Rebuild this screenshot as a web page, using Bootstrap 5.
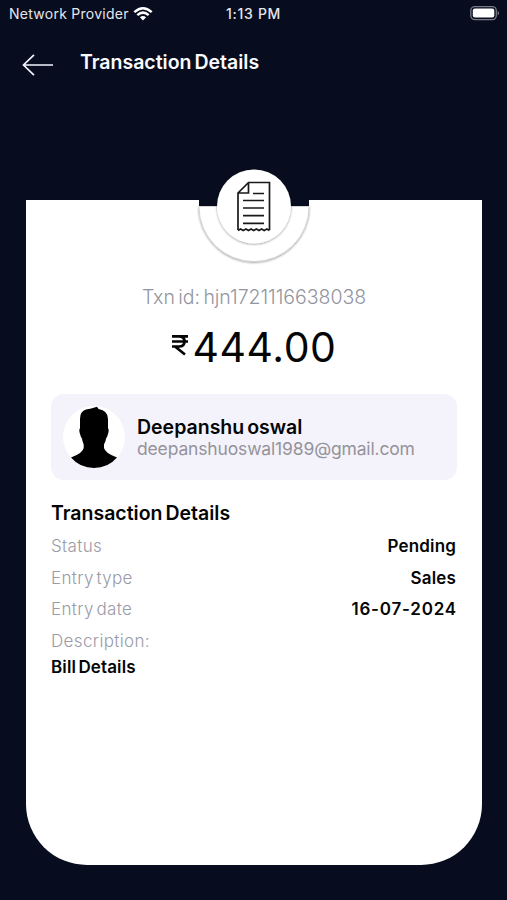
<!DOCTYPE html>
<html lang="en">
<head>
<meta charset="utf-8">
<meta name="viewport" content="width=device-width, initial-scale=1">
<title>Transaction Details</title>
<link href="https://cdn.jsdelivr.net/npm/bootstrap@5.3.0/dist/css/bootstrap.min.css" rel="stylesheet">
<style>
body{background:#070c1e;font-family:Inter,"Liberation Sans",sans-serif;height:900px;overflow:hidden;color:#050505}
.status-bar{height:28px;color:#e4e6ee;font-size:14px;line-height:28px;padding:0 7px 0 9px}
.provider{letter-spacing:.26px}
.side{width:217px}
.clock{font-weight:500;letter-spacing:.7px}
.app-bar{height:172px;padding:25px 0 0 22px}
.app-title{font-size:19.5px;line-height:24px;font-weight:600;letter-spacing:0;word-spacing:-2px;margin:-3px 0 0 26px;color:#fafbff}
.receipt{width:456px;height:665px;margin-left:26px;padding:0 25px;border-radius:0 0 61px 61px}
.emblem{left:171px;top:-32px}
.txn{margin-top:84px;font-size:19.5px;line-height:26px;font-weight:300;color:#9295a0;letter-spacing:-.04px;word-spacing:-2px}
.amount{font-size:41px;line-height:50px;margin-top:12px}
.sum{letter-spacing:.6px}
.rupee{width:17px;height:21px;margin:13px 4px 0 0}
.person{height:86px;margin-top:22px;border-radius:13px;background:#f4f2fb;padding-left:12px}
.person-name{font-size:19.5px;line-height:22px;font-weight:600;word-spacing:-2px}
.mail{font-size:17.5px;line-height:20px;color:#949399;letter-spacing:-.15px;margin-top:1px}
.section-title{font-size:19.5px;line-height:24px;font-weight:600;letter-spacing:0;word-spacing:-2px;margin:21px 0 6px}
.line{height:31.7px;line-height:31.7px;font-size:17px}
.line .key{color:#999ba6;font-weight:300;letter-spacing:.35px;word-spacing:-2.5px}
.val{font-weight:600;letter-spacing:.15px}
.line .val{margin-right:1px}
.line .date{letter-spacing:.8px;margin-right:0}
.bill{font-size:17px;line-height:20px;letter-spacing:.12px;word-spacing:-2px;margin-top:-1px}
</style>
</head>
<body>
<header>
  <div class="status-bar d-flex justify-content-between">
    <div class="side d-flex align-items-center gap-1"><span class="provider text-nowrap">Network Provider</span>
      <svg width="20" height="16" viewBox="0 0 20 16" fill="none" stroke="#fff" stroke-width="2.5"><path d="M1.3 6.1Q10-1.7 18.7 6.1M4.3 9.1Q10 4.2 15.7 9.1"/><path d="M6.9 11.2Q10 8.6 13.1 11.2L10 14.6Z" fill="#fff" stroke="none"/></svg>
    </div>
    <span class="clock flex-grow-1">1:13 PM</span>
    <svg class="mt-1" width="31" height="18" viewBox="0 0 31 18"><rect x="1.8" y="2.6" width="25.5" height="13" rx="4" fill="none" stroke="#777985" stroke-width="1.3"/><rect x="3.8" y="4.6" width="21.5" height="9" rx="2" fill="#fff"/><path d="M28.7 6.7q3 2.4 0 4.8z" fill="#777985"/></svg>
  </div>
  <div class="app-bar d-flex align-items-start">
    <svg width="32" height="24" viewBox="0 0 32 24" fill="none" stroke="#f2f4ff" stroke-width="1.7"><path d="M31 12H1.5M12 1.8 1.5 12 12 22.2"/></svg>
    <h1 class="app-title">Transaction Details</h1>
  </div>
</header>
<main class="receipt bg-white position-relative">
  <svg class="emblem position-absolute" width="114" height="100" viewBox="0 0 114 100">
    <defs><filter id="soft" x="-10%" y="-10%" width="120%" height="125%"><feDropShadow dx="0" dy=".6" stdDeviation=".8" flood-color="#000" flood-opacity=".48"/></filter></defs>
    <path d="M2 31H112V38H2Z" fill="#070c1e"/>
    <path d="M2 38.5H112A55 55 0 0 1 2 38.5Z" fill="#fff" stroke="#ccc" stroke-width=".7" filter="url(#soft)"/>
    <circle cx="57" cy="38.5" r="37" fill="#fff" filter="url(#soft)"/>
    <g fill="none" stroke="#191919" stroke-width="1.7"><path d="M41 62V25L51.5 14.5H72.5V62M41 25H51.5V14.5M56 25.5H67M46 32.5H67M46 40H67M46 47.7H67M46 55.3H67"/><path d="M41 62.5L43.6 61 46.2 62.5 48.9 61 51.5 62.5 54.1 61 56.7 62.5 59.4 61 62 62.5 64.6 61 67.2 62.5 69.9 61 72.5 62.5"/></g>
  </svg>
  <div class="d-flex flex-column">
    <div class="txn text-center"><span>Txn id: hjn1721116638038</span></div>
    <div class="amount d-flex justify-content-center">
      <svg class="rupee" viewBox="0 0 17 21" fill="none" stroke="#050505" stroke-width="2.7"><path d="M1 1.4H17M1 6.5H17M1 11.5H8Q13.5 11.5 13.5 6.5T8 1.4M4 11.5 14 19.5"/></svg><span class="sum">444.00</span>
    </div>
    <section class="person d-flex align-items-center">
      <svg width="62" height="62" viewBox="0 0 62 62"><circle cx="31" cy="31" r="31" fill="#fff"/><path d="M17 22.5V13Q17 5 23 3.5Q28 2.7 34 .7L35.5 3Q45 4.500 45 13V22.5Q46.200 23 45.300 27L44 31Q43 31.500 42.500 35L41 38.500V42Q42 47 54 51.500Q45 62 31 62Q17 62 8 51.500Q20 47 20.700 42V38.500L19.500 35Q19 31.500 18 31L16.700 27Q15.800 23 17 22.500Z" fill="#000"/></svg>
      <div class="ms-2 ps-1"><div class="person-name">Deepanshu oswal</div><div class="mail">deepanshuoswal1989@gmail.com</div></div>
    </section>
    <h2 class="section-title">Transaction Details</h2>
    <div class="line d-flex justify-content-between"><span class="key">Status</span><span class="val">Pending</span></div>
    <div class="line d-flex justify-content-between"><span class="key">Entry type</span><span class="val">Sales</span></div>
    <div class="line d-flex justify-content-between"><span class="key">Entry date</span><span class="val date">16-07-2024</span></div>
    <div class="line"><span class="key">Description:</span></div>
    <div class="bill val">Bill Details</div>
  </div>
</main>
<script src="https://cdn.jsdelivr.net/npm/bootstrap@5.3.0/dist/js/bootstrap.bundle.min.js"></script>
</body>
</html>
